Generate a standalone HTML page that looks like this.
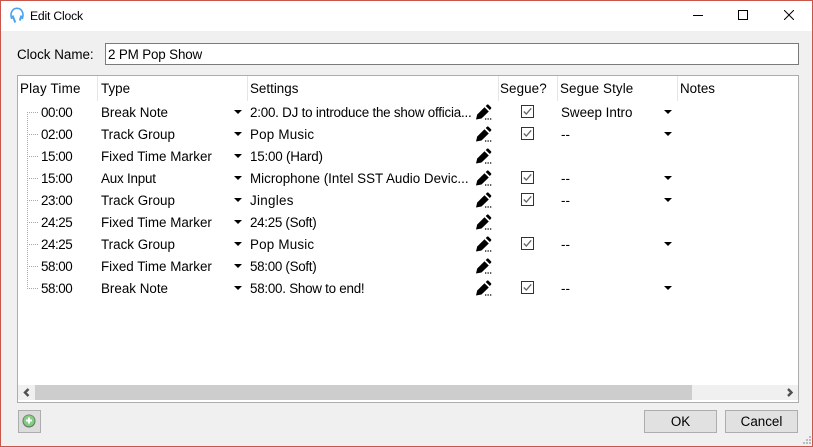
<!DOCTYPE html>
<html><head><meta charset="utf-8"><style>
html,body{margin:0;padding:0;width:813px;height:447px;overflow:hidden;background:#f0f0f0}
body{font-family:"Liberation Sans",sans-serif;font-size:13.4px;color:#000;position:relative}
.a,.t{position:absolute}
.t{white-space:pre;line-height:16px;height:16px;margin-top:1px}
.n{left:41px;letter-spacing:-.45px}
.hs{position:absolute;top:76px;width:1px;height:25px;background:#e5e5e5}
.arr{position:absolute;width:0;height:0;border-left:4px solid transparent;border-right:4px solid transparent;border-top:4px solid #000;margin-top:-1px}
.btn{position:absolute;top:410px;height:21px;background:#e1e1e1;border:1px solid #adadad;text-align:center;line-height:21px}
</style></head><body>
<div class="a" style="left:0;top:0;width:811px;height:445px;border:1px solid #c9564a;z-index:5"></div>
<div class="a" style="left:1px;top:1px;width:811px;height:30px;background:#fff"></div>
<svg class="a" style="left:9px;top:7px" width="16" height="16" viewBox="0 0 16 16" fill="none"><path d="M2.800 12C0.500 6 3.500 1.300 8 1.300S15.500 6 13.200 12" stroke="#4aa3ee" stroke-width="1.600"/><path d="M3.500 8.500L6.300 15.500M12.500 8.500L10.800 13.500" stroke="#4aa3ee" stroke-width="2"/></svg>
<div class="t" style="left:30px;top:7px;font-size:12.200px;letter-spacing:-.2px">Edit Clock</div>
<div class="a" style="left:693px;top:15px;width:10px;height:1px;background:#000"></div>
<div class="a" style="left:738px;top:10px;width:8px;height:8px;border:1px solid #000"></div>
<svg class="a" style="left:784px;top:10px" width="10" height="10" viewBox="0 0 10 10"><path d="M0 0L10 10M10 0L0 10" stroke="#000" stroke-width="1"/></svg>

<div class="t" style="left:17px;top:46px">Clock Name:</div>
<div class="a" style="left:105px;top:43px;width:692px;height:20px;background:#fff;border:1px solid #7a7a7a"></div>
<div class="t" style="left:108px;top:46px;letter-spacing:-.15px">2 PM Pop Show</div>

<div class="a" style="left:17px;top:75px;width:780px;height:326px;background:#fff;border:1px solid #adadad"></div>
<div class="hs" style="left:97px"></div><div class="hs" style="left:247px"></div><div class="hs" style="left:498px"></div><div class="hs" style="left:557px"></div><div class="hs" style="left:677px"></div>
<div class="t" style="left:20px;top:80px;letter-spacing:.2px">Play Time</div>
<div class="t" style="left:101px;top:80px">Type</div>
<div class="t" style="left:250px;top:80px">Settings</div>
<div class="t" style="left:500px;top:80px;letter-spacing:.1px">Segue?</div>
<div class="t" style="left:560px;top:80px;letter-spacing:.1px">Segue Style</div>
<div class="t" style="left:680px;top:80px">Notes</div>

<svg class="a" style="left:0;top:0" width="60" height="300"><path d="M27.500 112V288M27 112.500H39M27 134.500H39M27 156.500H39M27 178.500H39M27 200.500H39M27 222.500H39M27 244.500H39M27 266.500H39M27 288.500H39" stroke="#a8a8a8" stroke-width="1" stroke-dasharray="1 1" fill="none"/></svg>

<div class="t n" style="top:104px">00:00</div><div class="t" style="left:101px;top:104px">Break Note</div><div class="t" style="left:250px;top:104px;letter-spacing:-.22px">2:00. DJ to introduce the show officia...</div>
<div class="t n" style="top:126px">02:00</div><div class="t" style="left:101px;top:126px">Track Group</div><div class="t" style="left:250px;top:126px;letter-spacing:.2px">Pop Music</div>
<div class="t n" style="top:148px">15:00</div><div class="t" style="left:101px;top:148px">Fixed Time Marker</div><div class="t" style="left:250px;top:148px;letter-spacing:-.2px">15:00 (Hard)</div>
<div class="t n" style="top:170px">15:00</div><div class="t" style="left:101px;top:170px;letter-spacing:-.2px">Aux Input</div><div class="t" style="left:250px;top:170px">Microphone (Intel SST Audio Devic...</div>
<div class="t n" style="top:192px">23:00</div><div class="t" style="left:101px;top:192px">Track Group</div><div class="t" style="left:250px;top:192px;letter-spacing:.3px">Jingles</div>
<div class="t n" style="top:214px">24:25</div><div class="t" style="left:101px;top:214px">Fixed Time Marker</div><div class="t" style="left:250px;top:214px;letter-spacing:-.3px">24:25 (Soft)</div>
<div class="t n" style="top:236px">24:25</div><div class="t" style="left:101px;top:236px">Track Group</div><div class="t" style="left:250px;top:236px;letter-spacing:.2px">Pop Music</div>
<div class="t n" style="top:258px">58:00</div><div class="t" style="left:101px;top:258px">Fixed Time Marker</div><div class="t" style="left:250px;top:258px;letter-spacing:-.3px">58:00 (Soft)</div>
<div class="t n" style="top:280px">58:00</div><div class="t" style="left:101px;top:280px">Break Note</div><div class="t" style="left:250px;top:280px;letter-spacing:-.25px">58:00. Show to end!</div>

<div class="arr" style="left:234px;top:111px"></div><div class="arr" style="left:234px;top:133px"></div><div class="arr" style="left:234px;top:155px"></div><div class="arr" style="left:234px;top:177px"></div><div class="arr" style="left:234px;top:199px"></div><div class="arr" style="left:234px;top:221px"></div><div class="arr" style="left:234px;top:243px"></div><div class="arr" style="left:234px;top:265px"></div><div class="arr" style="left:234px;top:287px"></div>

<svg class="a" style="left:0;top:0" width="813" height="300">
<defs>
<g id="p"><path d="M0 15.500L1.200 10.500L8.500 3.200L12.800 7.500L5.500 14.500Z" fill="#000"/><path d="M9.700 2L11 .7Q11.700 0 12.500 .7L15 3.200Q15.700 4 15 4.700L13.800 6Z" fill="#000"/><path d="M9 15h1.300M11.500 15h1.300M14 15h1.300" stroke="#000" stroke-width="1.300"/></g>
<g id="c"><rect x=".5" y=".5" width="12" height="12" fill="#fff" stroke="#333"/><path d="M2.800 6.500L5.300 9L10.200 3.300" stroke="#666" stroke-width="1.300" fill="none"/></g>
</defs>
<use href="#p" x="476" y="104"/><use href="#p" x="476" y="126"/><use href="#p" x="476" y="148"/><use href="#p" x="476" y="170"/><use href="#p" x="476" y="192"/><use href="#p" x="476" y="214"/><use href="#p" x="476" y="236"/><use href="#p" x="476" y="258"/><use href="#p" x="476" y="280"/>
<use href="#c" x="521" y="105"/><use href="#c" x="521" y="127"/><use href="#c" x="521" y="171"/><use href="#c" x="521" y="193"/><use href="#c" x="521" y="237"/><use href="#c" x="521" y="281"/>
</svg>

<div class="t" style="left:561px;top:104px">Sweep Intro</div><div class="t" style="left:561px;top:126px">--</div><div class="t" style="left:561px;top:170px">--</div><div class="t" style="left:561px;top:192px">--</div><div class="t" style="left:561px;top:236px">--</div><div class="t" style="left:561px;top:280px">--</div>
<div class="arr" style="left:664px;top:111px"></div><div class="arr" style="left:664px;top:133px"></div><div class="arr" style="left:664px;top:177px"></div><div class="arr" style="left:664px;top:199px"></div><div class="arr" style="left:664px;top:243px"></div><div class="arr" style="left:664px;top:287px"></div>

<div class="a" style="left:18px;top:385px;width:780px;height:15px;background:#f0f0f0"></div>
<div class="a" style="left:35px;top:385px;width:657px;height:15px;background:#cdcdcd"></div>
<svg class="a" style="left:18px;top:385px" width="780" height="15" fill="none"><path d="M10.500 4L7 7.500L10.500 11M770 4L773.500 7.500L770 11" stroke="#505050" stroke-width="2.400"/></svg>

<div class="btn" style="left:18px;width:21px;background:#dcdcdc"></div>
<svg class="a" style="left:22px;top:414px" width="14" height="14"><circle cx="7" cy="7" r="6.500" fill="#5f7f5f"/><circle cx="7" cy="6.700" r="5.500" fill="#86cc86"/><path d="M7 3.500V9.500M4 6.500H10" stroke="#fff" stroke-width="2"/></svg>
<div class="btn" style="left:644px;width:71px">OK</div>
<div class="btn" style="left:725px;width:71px">Cancel</div>
<svg class="a" style="left:800px;top:436px" width="12" height="10" fill="#bcbcbc"><rect x="9" y="0" width="2" height="2"/><rect x="6" y="3" width="2" height="2"/><rect x="9" y="3" width="2" height="2"/><rect x="3" y="6" width="2" height="2"/><rect x="6" y="6" width="2" height="2"/><rect x="9" y="6" width="2" height="2"/></svg>
</body></html>
